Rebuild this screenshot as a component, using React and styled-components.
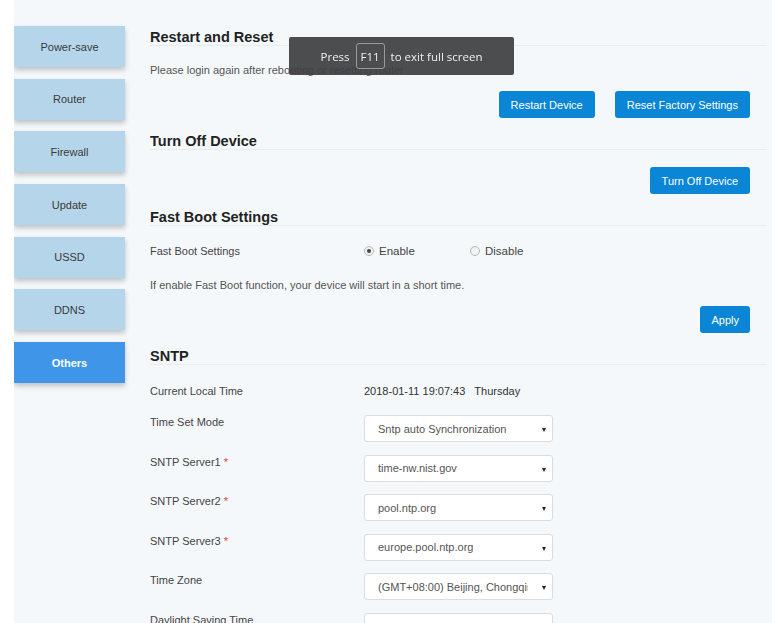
import React from 'react';
import styled, { createGlobalStyle } from 'styled-components';

const GlobalStyle = createGlobalStyle`
  html, body {
    margin: 0;
    padding: 0;
    background: #ffffff;
    font-family: 'Liberation Sans', Arial, sans-serif;
  }
`;

const Page = styled.div`
  display: flex;
  margin-left: 14px;
  width: 758px;
  height: 623px;
  overflow: hidden;
  background: #f4f8fb;
`;

const Sidebar = styled.nav`
  display: flex;
  flex-direction: column;
  gap: 11.7px;
  width: 111px;
  padding-top: 26px;
  flex-shrink: 0;
`;

const NavItem = styled.div`
  display: flex;
  align-items: center;
  justify-content: center;
  height: 41px;
  font-size: 11px;
  color: ${(p) => (p.active ? '#ffffff' : '#3a3a3a')};
  font-weight: ${(p) => (p.active ? 'bold' : 'normal')};
  background: ${(p) => (p.active ? '#3f96e8' : '#b5d6ea')};
  box-shadow: 0 3px 5px rgba(0, 0, 0, 0.22);
`;

const Main = styled.main`
  flex: 1;
  margin-left: 25px;
  margin-right: 5px;
  padding-top: 29px;
`;

const SectionTitle = styled.h2`
  margin: ${(p) => p.gap || 0}px 0 0;
  font-size: 14.5px;
  line-height: 16px;
  font-weight: bold;
  color: #222;
  border-bottom: 1px solid #e6ecf0;
`;

const Note = styled.p`
  margin: ${(p) => p.gap || 0}px 0 0;
  font-size: 11px;
  line-height: 16px;
  color: #555;
`;

const ButtonRow = styled.div`
  display: flex;
  justify-content: flex-end;
  gap: 20px;
  margin-top: ${(p) => p.gap || 0}px;
  padding-right: 17px;
`;

const Button = styled.button`
  height: 27px;
  padding: 0 ${(p) => p.pad || 12}px;
  border: none;
  border-radius: 3px;
  background: #0b86d6;
  color: #ffffff;
  font-family: 'Liberation Sans', Arial, sans-serif;
  font-size: 11px;
`;

const Row = styled.div`
  display: flex;
  align-items: ${(p) => (p.top ? 'flex-start' : 'center')};
  margin-top: ${(p) => p.gap || 0}px;
  font-size: 11px;
  line-height: 16px;
`;

const Label = styled.div`
  width: 214px;
  flex-shrink: 0;
  color: #444;
  line-height: ${(p) => (p.top ? '14px' : '16px')};
`;

const Required = styled.span`
  color: #e03b3b;
  margin-left: 3px;
`;

const Value = styled.div`
  color: #333;
  white-space: pre;
`;

const RadioOption = styled.label`
  display: flex;
  align-items: center;
  width: 106px;
  color: #444;
  font-size: 11.5px;
`;

const RadioDot = styled.span`
  position: relative;
  width: 8px;
  height: 8px;
  margin-right: 5px;
  border: 1px solid #b8b8b8;
  border-radius: 50%;
  background: #f2f2f2;

  &::after {
    content: '';
    display: ${(p) => (p.checked ? 'block' : 'none')};
    position: absolute;
    top: 2px;
    left: 2px;
    width: 4px;
    height: 4px;
    border-radius: 50%;
    background: #444;
  }
`;

const Select = styled.div`
  position: relative;
  display: flex;
  align-items: center;
  width: 189px;
  height: 27px;
  box-sizing: border-box;
  padding: 0 24px 0 13px;
  background: #ffffff;
  border: 1px solid #dcdcdc;
  border-radius: 3px;
  color: #555;
  font-size: 11px;
  white-space: nowrap;
  overflow: hidden;

  &::after {
    content: '';
    position: absolute;
    right: 6px;
    top: 12px;
    border-left: 2.5px solid transparent;
    border-right: 2.5px solid transparent;
    border-top: 4px solid #222;
  }
`;

const SelectText = styled.span`
  overflow: hidden;
`;

const Toast = styled.div`
  position: fixed;
  left: 289px;
  top: 37px;
  width: 225px;
  height: 38px;
  display: flex;
  align-items: center;
  justify-content: center;
  gap: 6px;
  background: rgba(62, 64, 66, 0.93);
  border-radius: 2px;
  color: #f0f0f0;
  font-family: 'Open Sans', 'Noto Sans', sans-serif;
  font-size: 11.5px;
`;

const Key = styled.span`
  display: inline-flex;
  align-items: center;
  justify-content: center;
  width: 27px;
  height: 24px;
  border: 1.5px solid #9a9a9a;
  border-radius: 3px;
`;

const navItems = ['Power-save', 'Router', 'Firewall', 'Update', 'USSD', 'DDNS', 'Others'];

const sntpFields = [
  { label: 'Time Set Mode', value: 'Sntp auto Synchronization' },
  { label: 'SNTP Server1', value: 'time-nw.nist.gov', required: true },
  { label: 'SNTP Server2', value: 'pool.ntp.org', required: true },
  { label: 'SNTP Server3', value: 'europe.pool.ntp.org', required: true },
  { label: 'Time Zone', value: '(GMT+08:00) Beijing, Chongqing, Hong Kong' },
  { label: 'Daylight Saving Time', value: '' },
];

export default function App() {
  return (
    <>
      <GlobalStyle />
      <Page>
        <Sidebar>
          {navItems.map((item) => (
            <NavItem key={item} active={item === 'Others'}>
              {item}
            </NavItem>
          ))}
        </Sidebar>
        <Main>
          <SectionTitle>Restart and Reset</SectionTitle>
          <Note gap={16}>Please login again after rebooting or resetting router</Note>
          <ButtonRow gap={13}>
            <Button>Restart Device</Button>
            <Button>Reset Factory Settings</Button>
          </ButtonRow>

          <SectionTitle gap={15}>Turn Off Device</SectionTitle>
          <ButtonRow gap={17}>
            <Button>Turn Off Device</Button>
          </ButtonRow>

          <SectionTitle gap={15}>Fast Boot Settings</SectionTitle>
          <Row gap={17}>
            <Label>Fast Boot Settings</Label>
            <RadioOption>
              <RadioDot checked />
              Enable
            </RadioOption>
            <RadioOption>
              <RadioDot />
              Disable
            </RadioOption>
          </Row>
          <Note gap={18}>If enable Fast Boot function, your device will start in a short time.</Note>
          <ButtonRow gap={13}>
            <Button pad={11}>Apply</Button>
          </ButtonRow>

          <SectionTitle gap={15}>SNTP</SectionTitle>
          <Row gap={18}>
            <Label>Current Local Time</Label>
            <Value>2018-01-11 19:07:43   Thursday</Value>
          </Row>
          {sntpFields.map((field, i) => (
            <Row key={field.label} top gap={i === 0 ? 16 : 12.6}>
              <Label top>
                {field.label}
                {field.required && <Required>*</Required>}
              </Label>
              <Select>
                <SelectText>{field.value}</SelectText>
              </Select>
            </Row>
          ))}
        </Main>
      </Page>
      <Toast>
        Press <Key>F11</Key> to exit full screen
      </Toast>
    </>
  );
}
